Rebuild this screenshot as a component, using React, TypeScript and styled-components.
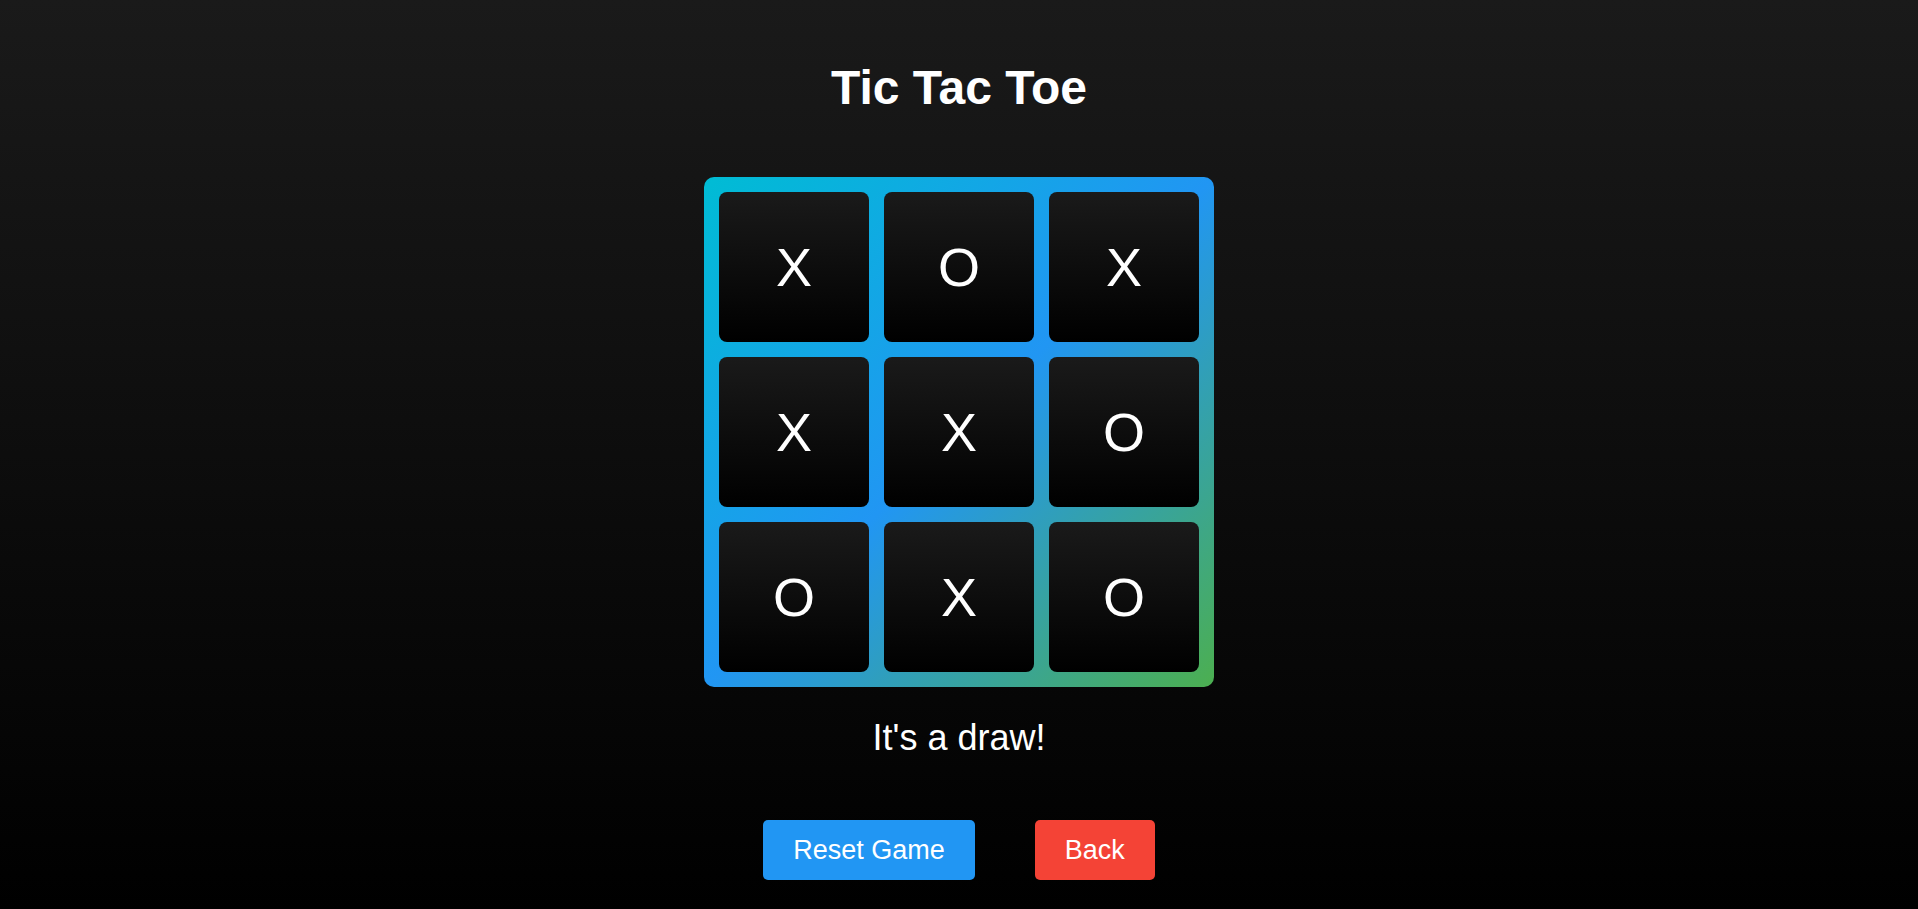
import React, { useState } from "react";
import styled, { createGlobalStyle } from "styled-components";

const GlobalStyle = createGlobalStyle`
  html, body {
    margin: 0;
    padding: 0;
  }
  body {
    font-family: "Liberation Sans", Arial, sans-serif;
    background: #000;
  }
`;

const Page = styled.div`
  min-height: 100vh;
  box-sizing: border-box;
  padding-top: 60px;
  display: flex;
  flex-direction: column;
  align-items: center;
  background: linear-gradient(to bottom, #1a1a1a, #000000);
  color: #ffffff;
`;

const Title = styled.h1`
  margin: 0 0 62px;
  font-size: 48px;
  font-weight: 700;
  color: #ffffff;
`;

const Board = styled.div`
  display: grid;
  grid-template-columns: repeat(3, 150px);
  grid-template-rows: repeat(3, 150px);
  gap: 15px;
  padding: 15px;
  border-radius: 10px;
  background: linear-gradient(135deg, #00bcd4, #2196f3, #4caf50);
`;

const Cell = styled.button`
  display: flex;
  align-items: center;
  justify-content: center;
  padding: 0;
  border: none;
  border-radius: 8px;
  background: linear-gradient(to bottom, #1a1a1a, #000000);
  color: #ffffff;
  font-family: "Liberation Sans", Arial, sans-serif;
  font-size: 54px;
  font-weight: 400;
  cursor: pointer;
`;

const Status = styled.p`
  margin: 30px 0 0;
  font-size: 36px;
  color: #ffffff;
`;

const Actions = styled.div`
  display: flex;
  gap: 60px;
  margin-top: 61px;
`;

const ActionButton = styled.button<{ $tone: "primary" | "danger" }>`
  padding: 15px 30px;
  border: none;
  border-radius: 5px;
  font-family: "Liberation Sans", Arial, sans-serif;
  font-size: 27px;
  line-height: 30px;
  color: #ffffff;
  background: ${(p) => (p.$tone === "primary" ? "#2196f3" : "#f44336")};
  cursor: pointer;
`;

const initial = ["X", "O", "X", "X", "X", "O", "O", "X", "O"];

export default function App() {
  const [cells, setCells] = useState<string[]>(initial);
  return (
    <>
      <GlobalStyle />
      <Page>
        <Title>Tic Tac Toe</Title>
        <Board>
          {cells.map((v, i) => (
            <Cell key={i}>{v}</Cell>
          ))}
        </Board>
        <Status>It's a draw!</Status>
        <Actions>
          <ActionButton $tone="primary" onClick={() => setCells(Array(9).fill(""))}>
            Reset Game
          </ActionButton>
          <ActionButton $tone="danger" onClick={() => setCells(initial)}>
            Back
          </ActionButton>
        </Actions>
      </Page>
    </>
  );
}
